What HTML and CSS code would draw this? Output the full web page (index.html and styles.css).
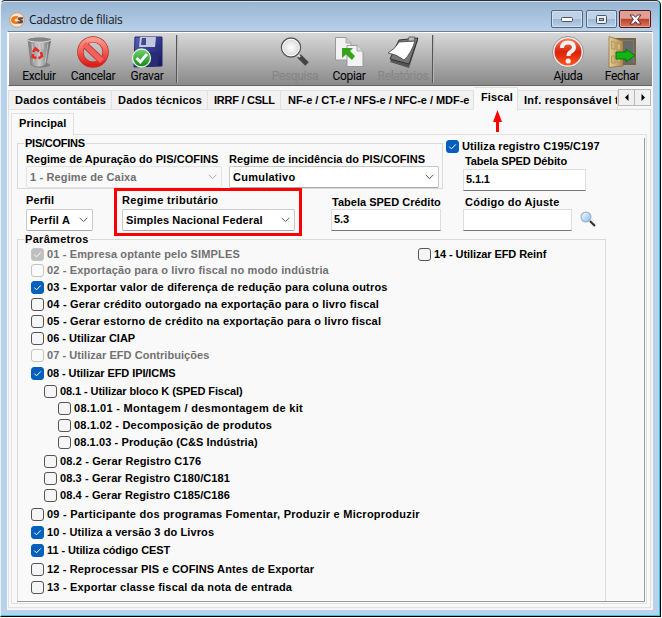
FILE: index.html
```html
<!DOCTYPE html>
<html lang="pt-BR">
<head>
<meta charset="utf-8">
<title>Cadastro de filiais</title>
<link rel="stylesheet" href="styles.css">
</head>
<body>
<svg width="0" height="0" class="defs">
  <defs>
    <linearGradient id="red" x2="0" y2="1"><stop stop-color="#ff9a8e"/><stop offset="1" stop-color="#df1d1b"/></linearGradient>
    <linearGradient id="help" x2="0" y2="1"><stop stop-color="#f58365"/><stop offset=".5" stop-color="#d92208"/><stop offset="1" stop-color="#ff5a20"/></linearGradient>
    <linearGradient id="bin" x2="1"><stop stop-color="#777"/><stop offset=".5" stop-color="#c9c9c9"/><stop offset="1" stop-color="#666"/></linearGradient>
    <linearGradient id="disk" x2="1" y2="1"><stop stop-color="#5560bb"/><stop offset="1" stop-color="#11165c"/></linearGradient>
    <linearGradient id="grn" x2="0" y2="1"><stop stop-color="#73d56d"/><stop offset="1" stop-color="#128616"/></linearGradient>
    <radialGradient id="lens"><stop stop-color="#fff"/><stop offset="1" stop-color="#d5d5d5"/></radialGradient>
    <linearGradient id="blens" x2="1" y2="1"><stop stop-color="#fff"/><stop offset="1" stop-color="#7fb6f5"/></linearGradient>
    <linearGradient id="door" x2="1"><stop stop-color="#e6cf98"/><stop offset="1" stop-color="#b08d50"/></linearGradient>
    <symbol id="chev" viewBox="0 0 9 6"><path d="M.7 .9 4.5 4.6 8.3 .9" fill="none" stroke="currentColor"/></symbol>
    <symbol id="check" viewBox="0 0 13 13"><path d="M3.3 6.6 5.5 8.8 9.8 4.4" fill="none" stroke="#fff" stroke-width="1"/></symbol>
  </defs>
</svg>
<div class="window">
  <header class="titlebar">
    <svg class="app-icon" width="16" height="16"><circle cx="8" cy="8" r="7.3" fill="#f9e3cc" stroke="#cda178"/><path d="M9 4Q2 3.500 2 8.200 2.500 12.500 8.500 12L8 9.600Q5.500 9.800 5.500 8 5.500 6.300 8.300 6.500Z" fill="#e8791b"/><path d="M14 5.300H10.500Q8 5.500 8.800 7.500L11.500 9.200H8.300V11.500H12.500Q15 10.500 13.500 8L11.400 7.200H14Z" fill="#684a39"/></svg>
    <h1>Cadastro de filiais</h1>
    <div class="controls">
      <span class="ctl"><svg width="12" height="6"><rect x=".5" y="1.500" width="11" height="4" rx="1" fill="#fff" stroke="#4b5664"/></svg></span>
      <span class="ctl mid"><svg width="11" height="9"><rect x=".5" y=".5" width="10" height="8" rx="1" fill="#eee" stroke="#4b5664"/><rect x="3.500" y="3.500" width="4" height="2" fill="#a8c0dc" stroke="#4b5664"/></svg></span>
      <span class="ctl close"><svg width="13" height="11"><path d="M1 1H4.500L6.500 3.300 8.500 1H12L8.600 5.400 12 10H8.500L6.500 7.500 4.500 10H1L4.400 5.400Z" fill="#fff" stroke="#52313b"/></svg></span>
    </div>
  </header>
  <main class="client">
    <nav class="toolbar">
      <div class="tool w-del"><svg width="32" height="32"><ellipse cx="18" cy="29" rx="9" ry="2.500" fill="#555" opacity=".5"/><path d="M5 3 8 29Q15 33 23 29L28 3Z" fill="url(#bin)" stroke="#777" stroke-width=".7"/><path d="M9 7 11 27M22 27 25 7M13 7V13M20 7V13" stroke="#eee" opacity=".5"/><ellipse cx="16.500" cy="3.500" rx="12" ry="2.700" fill="#858585" stroke="#ddd"/><path d="M10 16 12.500 12.500 16 15.500M18 16 19 20 15.500 22.500M13.500 22 9.500 21 10 18" fill="none" stroke="#e52b24" stroke-width="2.600"/></svg><span>Excluir</span></div>
      <div class="tool"><svg width="32" height="32"><circle cx="16" cy="16" r="12.600" fill="none" stroke="#b92d29" stroke-width="6.400"/><path d="M7 8 25 25" stroke="#b92d29" stroke-width="7"/><circle cx="16" cy="16" r="12.600" fill="none" stroke="url(#red)" stroke-width="5"/><path d="M7 8 25 25" stroke="#f4605a" stroke-width="5.300"/></svg><span>Cancelar</span></div>
      <div class="tool"><svg width="32" height="32"><path d="M4 1H31V30L3 31Z" fill="url(#disk)" stroke="#22276d"/><path d="M9 1H25L24 11H8Z" fill="#c2c8df"/><path d="M11 2H15V9H10Z" fill="#454b88"/><path d="M8 16H27V30H7Z" fill="#272d70"/><circle cx="10.500" cy="22" r="9" fill="url(#grn)" stroke="#e4f4e4" stroke-width="1.300"/><path d="M5.500 22 9.300 26 16 18" fill="none" stroke="#fff" stroke-width="2.800"/></svg><span>Gravar</span></div>
      <i class="sep"></i>
      <div class="tool w-sea off"><svg width="32" height="32"><path d="M20 20 28 28" stroke="#444" stroke-width="5"/><path d="M18 18 21 21" stroke="#ddd" stroke-width="2"/><circle cx="12" cy="11.500" r="9.500" fill="url(#lens)" stroke="#555" stroke-width="1.400"/><circle cx="12" cy="11.500" r="8.300" fill="none" stroke="#fff"/></svg><span>Pesquisa</span></div>
      <div class="tool"><svg width="32" height="32"><path d="M2.500 1.500H13L18 7V24H2.500Z" fill="#f2f2f2" stroke="#999"/><path d="M13 1.500V7H18" fill="#ccc" stroke="#aaa"/><path d="M14 9.500H24L30 15V30.500H14Z" fill="#f3f3f3" stroke="#999"/><path d="M24 9.500V15H30" fill="#ddd" stroke="#aaa"/><path d="M9 12H20L17 15 22 20 19 24 13 18.500 9 22Z" fill="#36a21c"/></svg><span>Copiar</span></div>
      <div class="tool off"><svg width="32" height="32"><path d="M12 6 31 4 22 32 3 26Z" fill="#555"/><path d="M12 4 31 2 22 28 3 23Z" fill="#777" stroke="#333"/><path d="M12 6 28 5Q24 18 17 24 9 18 1 17 9 12 12 6Z" fill="#fff" stroke="#444" stroke-width=".8"/><path d="M21 5 22 1H28L27 5Z" fill="#bbb" stroke="#666"/></svg><span>Relatórios</span></div>
      <i class="sep late"></i>
      <div class="tool w-hlp"><svg width="32" height="32"><circle cx="16" cy="16" r="14.500" fill="url(#help)" stroke="#eee" stroke-width="2"/><circle cx="16" cy="16" r="15.500" fill="none" stroke="#777" stroke-width=".7"/><path d="M10 12Q10 6.500 16 6.500 22 6.500 22 11.500 22 14 18.500 16 16.500 17 16.500 20" fill="none" stroke="#f1f1f1" stroke-width="4"/><circle cx="16.200" cy="25" r="2.600" fill="#f1f1f1"/></svg><span>Ajuda</span></div>
      <div class="tool"><svg width="32" height="32"><path d="M4 3H29V28H4Z" fill="#777" stroke="#786342" stroke-width="2"/><path d="M10 5H27V27H10Z" fill="#696b6a"/><path d="M3 .5 17 5V30L3 31.500Z" fill="url(#door)" stroke="#8a6a38" stroke-width=".7"/><path d="M5.500 5 9 6V13H5.500ZM11 7 14.500 8V14H11ZM5.500 20H9V27H5.500ZM11 20H14.500V26H11Z" fill="#d4b77d" stroke="#a18047" stroke-width=".6"/><path d="M10 16H20V13L29 19.500 20 26V23H10Z" fill="#12b312" stroke="#087908"/></svg><span>Fechar</span></div>
    </nav>
    <div class="tabs">
      <span class="tab t1 k20">Dados contábeis</span><span class="tab t2 k20">Dados técnicos</span><span class="tab t3 k-20">IRRF / CSLL</span><span class="tab t4 k-5">NF-e / CT-e / NFS-e / NFC-e / MDF-e</span><span class="tab t5 active k10">Fiscal<svg class="pointer" width="9" height="22"><path d="M4.500 0 9 12H6V22H3V12H0Z" fill="#f00"/></svg></span><span class="tab t6">Inf. responsável t</span>
      <div class="spin"><b><svg width="4" height="7"><path d="M3.500 0V7L0 3.500Z"/></svg></b><b><svg width="4" height="7"><path d="M.5 0V7L4 3.500Z"/></svg></b></div>
    </div>
    <div class="page">
      <div class="subtab k10">Principal</div>
      <div class="subpage">
        <div class="scroll">
          <div class="row-top">
            <section class="group pis">
              <h2 class="legend k-25">PIS/COFINS</h2>
              <div class="pair">
                <div class="field"><label class="k5">Regime de Apuração do PIS/COFINS</label><div class="combo disabled c1 k15"><span>1 - Regime de Caixa</span><svg width="9" height="6"><use href="#chev"/></svg></div></div>
                <div class="field"><label class="k5">Regime de incidência do PIS/COFINS</label><div class="combo c2"><span>Cumulativo</span><svg width="9" height="6"><use href="#chev"/></svg></div></div>
              </div>
            </section>
            <div class="debit">
              <div class="check k10"><i class="box on"><svg width="13" height="13"><use href="#check"/></svg></i><span>Utiliza registro C195/C197</span></div>
              <label class="k-15">Tabela SPED Débito</label>
              <div class="input i1 k-15">5.1.1</div>
            </div>
          </div>
          <div class="row-mid">
            <div class="field perfil"><label class="k10">Perfil</label><div class="combo"><span>Perfil A</span><svg width="9" height="6"><use href="#chev"/></svg></div></div>
            <div class="field regime"><label class="k30">Regime tributário</label><div class="combo k15"><span>Simples Nacional Federal</span><svg width="9" height="6"><use href="#chev"/></svg></div></div>
            <div class="field credito"><label class="k0">Tabela SPED Crédito</label><div class="input k-5">5.3</div></div>
            <div class="field ajuste"><label>Código do Ajuste</label><div class="input"></div></div>
            <svg class="lookup" width="17" height="17"><path d="M10 10 15 15" stroke="#333" stroke-width="2.200"/><circle cx="6" cy="6" r="4.900" fill="url(#blens)" stroke="#a2b4cb" stroke-width="1.300"/></svg>
          </div>
          <section class="group params">
            <h2 class="legend k30">Parâmetros</h2>
            <div class="cols">
              <div class="list">
                <div class="check dim k15"><i class="box on"><svg width="13" height="13"><use href="#check"/></svg></i><span>01 - Empresa optante pelo SIMPLES</span></div>
                <div class="check dim tight k15"><i class="box"></i><span>02 - Exportação para o livro fiscal no modo indústria</span></div>
                <div class="check k20"><i class="box on"><svg width="13" height="13"><use href="#check"/></svg></i><span>03 - Exportar valor de diferença de redução para coluna outros</span></div>
                <div class="check k20"><i class="box"></i><span>04 - Gerar crédito outorgado na exportação para o livro fiscal</span></div>
                <div class="check k20"><i class="box"></i><span>05 - Gerar estorno de crédito na exportação para o livro fiscal</span></div>
                <div class="check k0"><i class="box"></i><span>06 - Utilizar CIAP</span></div>
                <div class="check dim k5"><i class="box"></i><span>07 - Utilizar EFD Contribuições</span></div>
                <div class="check s1 k-10"><i class="box on"><svg width="13" height="13"><use href="#check"/></svg></i><span>08 - Utilizar EFD IPI/ICMS</span></div>
                <div class="check n1 s1 k-10"><i class="box"></i><span>08.1 - Utilizar bloco K (SPED Fiscal)</span></div>
                <div class="check n2 k30"><i class="box"></i><span>08.1.01 - Montagem / desmontagem de kit</span></div>
                <div class="check n2 k20"><i class="box"></i><span>08.1.02 - Decomposição de produtos</span></div>
                <div class="check n2 k10"><i class="box"></i><span>08.1.03 - Produção (C&amp;S Indústria)</span></div>
                <div class="check n1 s2 k15"><i class="box"></i><span>08.2 - Gerar Registro C176</span></div>
                <div class="check n1 k10"><i class="box"></i><span>08.3 - Gerar Registro C180/C181</span></div>
                <div class="check n1 k10"><i class="box"></i><span>08.4 - Gerar Registro C185/C186</span></div>
                <div class="check s2"><i class="box"></i><span>09 - Participante dos programas Fomentar, Produzir e Microproduzir</span></div>
                <div class="check s1 k10"><i class="box on"><svg width="13" height="13"><use href="#check"/></svg></i><span>10 - Utiliza a versão 3 do Livros</span></div>
                <div class="check s1 k-10"><i class="box on"><svg width="13" height="13"><use href="#check"/></svg></i><span>11 - Utiliza código CEST</span></div>
                <div class="check s2 k15"><i class="box"></i><span>12 - Reprocessar PIS e COFINS Antes de Exportar</span></div>
                <div class="check s1 k20"><i class="box"></i><span>13 - Exportar classe fiscal da nota de entrada</span></div>
              </div>
              <div class="list"><div class="check k-10"><i class="box"></i><span>14 - Utilizar EFD Reinf</span></div></div>
            </div>
          </section>
        </div>
      </div>
    </div>
  </main>
</div>
</body>
</html>
```
FILE: styles.css
```css
* { box-sizing: border-box; }
html { background: #fff; }
body { margin: 0; font: bold 11px/13px "Liberation Sans", Arial, sans-serif; letter-spacing: .25px; color: #000; white-space: nowrap; overflow: hidden; }
svg { display: block; flex: none; }
.defs { position: absolute; }
h1, h2 { margin: 0; font: inherit; }

/* Letter tracking, in hundredths of a pixel */
.k-25 { letter-spacing: -.25px; } .k-20 { letter-spacing: -.25px; } .k-15 { letter-spacing: -.13px; } .k-10 { letter-spacing: -.09px; } .k-5 { letter-spacing: -.04px; }
.k0 { letter-spacing: .01px; } .k5 { letter-spacing: .05px; } .k10 { letter-spacing: .1px; } .k15 { letter-spacing: .14px; } .k20 { letter-spacing: .2px; } .k30 { letter-spacing: .31px; }

.window { width: 661px; height: 617px; padding: 0 6px 6px; border: 1px solid #000; border-left-color: #e9f2f8; border-top: 1px solid #302f36; border-radius: 5px 5px 0 0; background: linear-gradient(#98b4d1, #b9d1ea 31px); box-shadow: inset -1px -1px #35c5e0, inset 0 1px #d4e0ee; }
.titlebar { height: 30px; display: flex; align-items: center; padding: 7px 2px 0; }
.app-icon { margin: 0 4px 0 0; }
h1 { font: 12px/18px "Open Sans", "Noto Sans", sans-serif; letter-spacing: -.3px; color: #14171d; }
.controls { display: flex; gap: 3px; align-self: flex-start; margin: 2px 1px 0 auto; }
.ctl { width: 32px; height: 18px; display: flex; align-items: center; justify-content: center; border: 1px solid #526880; border-radius: 2px; box-shadow: inset 0 0 0 1px #d2e0f0; background: linear-gradient(#bfd1e6 48%, #9bb7d5 50%, #b9d1ea); }
.ctl.mid { width: 31px; }
.ctl.close { border-color: #4c1824; margin-left: -1px; box-shadow: inset 0 0 0 1px #e4a69a; background: linear-gradient(#dfa092 46%, #bc3f2c 50%, #d97958); }
.client { height: 579px; background: #f3f3f3; border: 1px solid #f9f9f9; border-top-color: #777f88; width: 646px; }
.toolbar { height: 54px; border: 1px solid #fff; border-width: 1px 0 1px 1px; border-bottom-color: #666; background: linear-gradient(#d8d8d8, #898989); display: flex; padding-top: 3px; }
.tool { width: 54px; display: flex; flex-direction: column; align-items: center; font: 12px/14px Roboto, "Liberation Sans", sans-serif; letter-spacing: -.3px; }
.tool span { margin-top: 1px; }
.off span { color: #858585; }
.w-del { margin-left: 3px; }
.sep { width: 2px; height: 48px; margin: -1px 0 0 2px; background: #555; border-right: 1px solid #b5b5b5; }
.w-sea { margin-left: 90px; }
.sep.late { margin-left: 2px; }
.w-hlp { margin-left: 107px; }
.tabs { display: flex; height: 21px; padding: 3px 0 0; margin-top: 1px; background: #f8f8f8; align-items: flex-start; }
.tab { height: 19px; line-height: 18px; border: 1px solid #e0e0e0; border-left: 0; border-bottom: 0; background: #f2f2f2; overflow: hidden; }
.t1 { width: 104px; border-left: 1px solid #e0e0e0; padding-left: 6px; }
.t2 { width: 96px; padding-left: 6px; }
.t3 { width: 73px; padding-left: 6px; }
.t4 { width: 193px; padding-left: 7px; }
.t5 { width: 44px; padding-left: 7px; }
.t6 { width: 100px; padding-left: 6px; }
.tab.active { height: 24px; margin-top: -3px; background: #f9f9f9; position: relative; overflow: visible; }
.pointer { position: absolute; left: 19px; top: 22px; z-index: 2; }
.spin { display: flex; margin-top: -1px; }
.spin b { width: 17px; height: 17px; display: flex; align-items: center; justify-content: center; background: #f0f0f0; border: 1px solid #b8b8b8; }
.spin b + b { border-left: 0; width: 16px; }
.page { height: 499px; margin: 1px 0 0; padding: 3px 4px 4px 3px; border: 1px solid #e1e1e1; background: #f9f9f9; width: 643px; }
.subtab { width: 63px; height: 22px; border: 1px solid #e0e0e0; border-bottom: 0; line-height: 18px; padding-left: 7px; margin-left: -1px; background: #f9f9f9; position: relative; margin-bottom: -1px; }
.subpage { height: 470px; width: 636px; margin-left: -1px; border: 1px solid #e0e0e0; background: #f9f9f9; padding: 3px 0 0 5px; }
.scroll { width: 628px; height: 464px; border-right: 1px solid #999; border-bottom: 1px solid #999; }
.row-top { display: flex; height: 50px; padding-top: 5px; }
.group { border: 1px solid #d9d9d9; }
.legend { width: max-content; padding: 0 1px; margin: -7px 0 0 6px; background: #f9f9f9; }
.pis { width: 426px; height: 46px; }
.pair { display: flex; margin: 3px 0 0 8px; }
.field label { display: block; height: 13px; }
.combo { height: 22px; display: flex; align-items: center; justify-content: space-between; padding: 0 4px 0 3px; background: #fff; border: 1px solid #c9c9c9; border-bottom-color: #aaa; border-radius: 2px; color: #000; }
.combo svg { color: #555; }
.combo.disabled { color: #707070; border-color: #e4e4e4; background: #f9f9f9; }
.disabled svg { color: #aaa; }
.c1 { width: 196px; margin-right: 7px; } .c2 { width: 210px; }
.debit { margin: -5px 0 0 3px; }
.debit label { display: block; margin: 0 0 1px 19px; }
.input { height: 22px; line-height: 18px; padding-left: 2px; border: 1px solid #ddd; border-bottom-color: #777; background: #fff; }
.i1 { width: 123px; margin-left: 17px; }
.row-mid { display: flex; height: 48px; }
.field.perfil { margin: 6px 21px 0 9px; width: 67px; }
.field.perfil label, .regime label { height: 15px; }
.regime { width: 188px; height: 48px; border: 3px solid #f00; padding: 3px 4px 0 5px; }
.credito { width: 110px; margin: 8px 0 0 29px; }
.credito label { padding-left: 1px; }
.ajuste label { padding-left: 2px; }
.ajuste { width: 109px; margin: 8px 0 0 22px; }
.lookup { margin: 23px 0 0 8px; }
.params { width: 589px; height: 362px; margin-top: 3px; border-bottom: 0; }
.cols { display: flex; padding-left: 13px; }
.list { width: 387px; }
.check { display: flex; align-items: center; height: 17px; gap: 3px; }
.box { flex: none; width: 13px; height: 13px; border: 1px solid #555; border-radius: 3px; background: #f5f5f5; }
.box.on { background: #0560bd; border-color: #0560bd; }
.box svg { margin: -1px; }
.dim { color: #717171; }
.dim .box { border-color: #c4c4c4; background: #fafafa; }
.dim .box.on { background: #bfbfbf; }
.n1 { padding-left: 13px; } .n2 { padding-left: 27px; }
.tight { margin-top: -1px; } .s1 { margin-top: 1px; } .s2 { margin-top: 2px; }
```
